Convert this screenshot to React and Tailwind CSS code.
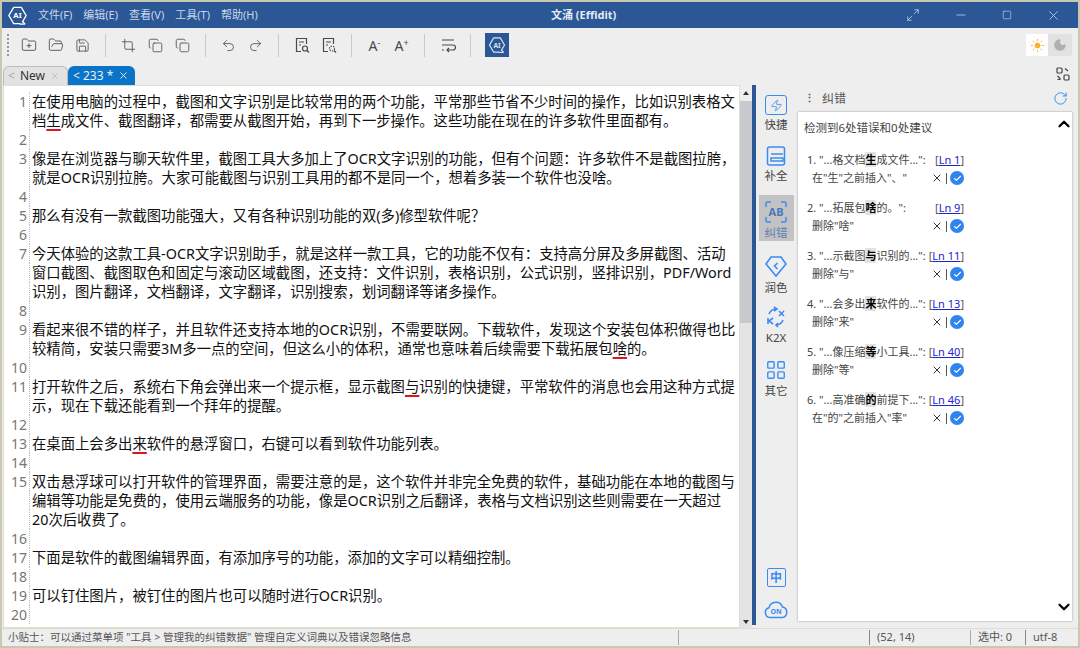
import { FolderPlus, FolderOpen, Save, Crop, Copy, Undo2, Redo2, Maximize2, Minus, Square, X, RotateCw, ChevronUp, ChevronDown, Check, Sun, Moon, LayoutGrid, Zap } from 'lucide-react';

const MENUS = ['文件(F)', '编辑(E)', '查看(V)', '工具(T)', '帮助(H)'];

const Err = ({ children }) => (
  <span className="underline decoration-[#e0141c] decoration-2 underline-offset-[3px]">{children}</span>
);

const LINES = [
  [1, '在使用电脑的过程中，截图和文字识别是比较常用的两个功能，平常那些节省不少时间的操作，比如识别表格文'],
  [null, <>档<Err>生</Err>成文件、截图翻译，都需要从截图开始，再到下一步操作。这些功能在现在的许多软件里面都有。</>],
  [2, ''],
  [3, '像是在浏览器与聊天软件里，截图工具大多加上了OCR文字识别的功能，但有个问题：许多软件不是截图拉胯，'],
  [null, '就是OCR识别拉胯。大家可能截图与识别工具用的都不是同一个，想着多装一个软件也没啥。'],
  [4, ''],
  [5, '那么有没有一款截图功能强大，又有各种识别功能的双(多)修型软件呢？'],
  [6, ''],
  [7, '今天体验的这款工具-OCR文字识别助手，就是这样一款工具，它的功能不仅有：支持高分屏及多屏截图、活动'],
  [null, '窗口截图、截图取色和固定与滚动区域截图，还支持：文件识别，表格识别，公式识别，竖排识别，PDF/Word'],
  [null, '识别，图片翻译，文档翻译，文字翻译，识别搜索，划词翻译等诸多操作。'],
  [8, ''],
  [9, '看起来很不错的样子，并且软件还支持本地的OCR识别，不需要联网。下载软件，发现这个安装包体积做得也比'],
  [null, <>较精简，安装只需要3M多一点的空间，但这么小的体积，通常也意味着后续需要下载拓展包<Err>啥</Err>的。</>],
  [10, ''],
  [11, '打开软件之后，系统右下角会弹出来一个提示框，显示截图与识别的快捷键，平常软件的消息也会用这种方式提'.replace('与识别', '\u0000')],
  [null, '示，现在下载还能看到一个拜年的提醒。'],
  [12, ''],
  [13, <>在桌面上会多出<Err>来</Err>软件的悬浮窗口，右键可以看到软件功能列表。</>],
  [14, ''],
  [15, '双击悬浮球可以打开软件的管理界面，需要注意的是，这个软件并非完全免费的软件，基础功能在本地的截图与'],
  [null, '编辑等功能是免费的，使用云端服务的功能，像是OCR识别之后翻译，表格与文档识别这些则需要在一天超过'],
  [null, '20次后收费了。'],
  [16, ''],
  [17, '下面是软件的截图编辑界面，有添加序号的功能，添加的文字可以精细控制。'],
  [18, ''],
  [19, '可以钉住图片，被钉住的图片也可以随时进行OCR识别。'],
  [20, ''],
];
LINES[15][1] = <>打开软件之后，系统右下角会弹出来一个提示框，显示截图<Err>与</Err>识别的快捷键，平常软件的消息也会用这种方式提</>;

const ISSUES = [
  { pre: '1. "...格文档', bad: '生', post: '成文件...":', ln: 'Ln 1', fix: '在"生"之前插入"、"' },
  { pre: '2. "...拓展包', bad: '啥', post: '的。":', ln: 'Ln 9', fix: '删除"啥"' },
  { pre: '3. "...示截图', bad: '与', post: '识别的...":', ln: 'Ln 11', fix: '删除"与"' },
  { pre: '4. "...会多出', bad: '来', post: '软件的...":', ln: 'Ln 13', fix: '删除"来"' },
  { pre: '5. "...像压缩', bad: '等', post: '小工具...":', ln: 'Ln 40', fix: '删除"等"' },
  { pre: '6. "...高准确', bad: '的', post: '前提下...":', ln: 'Ln 46', fix: '在"的"之前插入"率"' },
];

const Sep = () => <div className="mx-[9px] h-[23px] w-px bg-[#c4cbd3]" />;

const Tool = ({ children }) => (
  <div className="flex w-[27px] items-center justify-center text-[#4a4a4a]">{children}</div>
);

function AiLogo({ size = 24 }) {
  return (
    <svg width={size} height={size} viewBox="0 0 24 24" fill="none" stroke="currentColor" strokeWidth="1.4">
      <path d="M8 3.5h8l5 8.5-4 7M15 20.5H8L3 12l5-8.5" />
      <path d="M17 18l3 3M14 21h6" />
      <text x="12" y="15" textAnchor="middle" fontSize="8" fontWeight="700" fill="currentColor" stroke="none">AI</text>
    </svg>
  );
}

function FileGlass({ dots }) {
  return (
    <svg width="18" height="18" viewBox="0 0 18 18" fill="none" stroke="currentColor" strokeWidth="1.2">
      <path d="M8 15.5H3.5v-13h10V8" />
      <path d="M6 6h5M6 9h2" />
      <circle cx="12" cy="12.5" r="2.5" strokeDasharray={dots ? '1.5 1' : undefined} />
      <path d="M14 14.5l2 2" />
    </svg>
  );
}

function SideItem({ icon, label, active, className = '' }) {
  return (
    <div className={`flex w-[35px] flex-col items-center ${active ? 'bg-[#c3c3c3] text-[#5b7fb5]' : 'text-[#444]'} ${className}`}>
      {icon}
      <span className="mt-[2px] text-[11.5px] leading-[15px]">{label}</span>
    </div>
  );
}

export default function App() {
  return (
    <div
      className="flex h-[648px] w-[1080px] flex-col overflow-hidden border-x-[2px] border-y-[2px] border-[#c9c9b2] bg-[#eeeeee]"
      style={{ fontFamily: '"Noto Sans", "Noto Sans CJK SC", sans-serif' }}
    >
      {/* title bar */}
      <div className="relative flex h-[26px] shrink-0 items-center bg-[#2b5797] pl-[4px] text-[#c9d6e8]">
        <span className="text-white"><AiLogo size={23} /></span>
        <div className="ml-[9px] flex gap-[11px] text-[11px]">
          {MENUS.map((m) => <span key={m}>{m}</span>)}
        </div>
        <span className="absolute left-[549px] text-[11px] font-bold text-[#e4eaf3]">文涌 (Effidit)</span>
        <div className="ml-auto flex items-center gap-[34px] pr-[17px]">
          <Maximize2 size={14} strokeWidth={1.3} />
          <Minus size={14} strokeWidth={1.3} />
          <Square size={10} strokeWidth={1.5} />
          <X size={15} strokeWidth={1.3} />
        </div>
      </div>

      {/* toolbar */}
      <div className="flex h-[34px] shrink-0 items-center pl-[5px] pr-[6px]">
        <div className="h-[22px] w-[2px] border-l-2 border-dotted border-[#999]" />
        <div className="ml-[6px] flex items-center">
          <Tool><FolderPlus size={16} strokeWidth={1.3} /></Tool>
          <Tool><FolderOpen size={16} strokeWidth={1.3} /></Tool>
          <Tool><Save size={15} strokeWidth={1.3} /></Tool>
          <Sep />
          <Tool><Crop size={15} strokeWidth={1.3} /></Tool>
          <Tool><Copy size={15} strokeWidth={1.3} /></Tool>
          <Tool><Copy size={15} strokeWidth={1.3} strokeDasharray="3 1" /></Tool>
          <Sep />
          <Tool><Undo2 size={15} strokeWidth={1.3} /></Tool>
          <Tool><Redo2 size={15} strokeWidth={1.3} /></Tool>
          <Sep />
          <Tool><FileGlass /></Tool>
          <Tool><FileGlass dots /></Tool>
          <Sep />
          <Tool><span className="text-[14px]">A<sup className="text-[9px]">-</sup></span></Tool>
          <Tool><span className="text-[14px]">A<sup className="text-[9px]">+</sup></span></Tool>
          <Sep />
          <Tool>
            <svg width="16" height="16" viewBox="0 0 16 16" fill="none" stroke="currentColor" strokeWidth="1.2">
              <path d="M2 3h12M2 8h11a2 2 0 010 5H7M9 11l-2 2 2 2M2 13h2" />
            </svg>
          </Tool>
          <Sep />
          <div className="ml-[5px] flex h-[24px] w-[24px] items-center justify-center bg-[#2b5797] text-[#d9e3f0]">
            <AiLogo size={20} />
          </div>
        </div>
        <div className="ml-auto flex h-[22px]">
          <div className="flex w-[22px] items-center justify-center bg-white text-[#fbb02d]"><Sun size={15} fill="currentColor" strokeWidth={1.5} /></div>
          <div className="flex w-[24px] items-center justify-center bg-[#e2e2e2] text-[#b0b0b0]"><Moon size={14} fill="currentColor" /></div>
        </div>
      </div>

      {/* tabs */}
      <div className="flex h-[23px] shrink-0 items-end pl-[1px] pr-[8px]">
        <div className="flex h-[19px] w-[65px] items-center gap-[5px] rounded-t-[6px] border border-b-0 border-[#bbb] bg-[#e2e2e2] pl-[4px] text-[12px] text-[#333]">
          <span className="text-[#aaa]">&lt;</span>New<X size={10} className="text-[#bbb]" />
        </div>
        <div className="flex h-[19px] w-[67px] items-center gap-[5px] rounded-t-[6px] bg-[#0a74c9] pl-[5px] text-[12px] text-[#e6f1fa]">
          &lt; 233 *<X size={11} />
        </div>
        <div className="ml-auto mb-[4px] text-[#444]">
          <svg width="14" height="14" viewBox="0 0 14 14" fill="none" stroke="currentColor" strokeWidth="1.2">
            <rect x="1" y="1" width="5" height="5" rx="1" />
            <rect x="8" y="8" width="5" height="5" rx="1" />
            <path d="M9 1.5l3 2.5M1.5 9l3 3M1.5 12.5h3" />
          </svg>
        </div>
      </div>

      {/* main */}
      <div className="flex min-h-0 flex-1">
        {/* editor */}
        <div className="ml-[1px] w-[737px] overflow-hidden border border-[#dfdfcf] bg-white pt-[6px]">
          {LINES.map(([num, text], i) => (
            <div key={i} className="flex h-[19px] items-center">
              <div className="w-[25px] shrink-0 pr-[2px] text-right text-[14px] leading-[19px] text-[#777]">{num}</div>
              <div className="h-[19px] shrink-0 border-l border-dotted border-[#bbb]" />
              <div className="whitespace-nowrap pl-[2px] text-[14.35px] leading-[19px] text-[#111]">{text}</div>
            </div>
          ))}
        </div>

        {/* scrollbar */}
        <div className="flex w-[12px] shrink-0 flex-col items-center bg-[#e4e4e4]">
          <div className="flex h-[16px] w-full items-center justify-center bg-[#eeeeee]">
            <div className="h-0 w-0 border-x-[3.5px] border-b-[4px] border-x-transparent border-b-[#333]" />
          </div>
          <div className="h-[222px] w-full bg-[#c6c9ce]" />
          <div className="mt-auto mb-[4px] h-0 w-0 border-x-[3.5px] border-t-[4px] border-x-transparent border-t-[#333]" />
        </div>
        <div className="mb-[3px] w-[4px] shrink-0 bg-[#2b5797]" />

        {/* side nav */}
        <div className="flex w-[40px] shrink-0 flex-col items-center pt-[10px] text-[#3b8bf5]">
          <SideItem label="快捷" icon={
            <div className="relative flex h-[20px] w-[22px] items-center justify-center rounded-[3px] border-[1.5px] border-[#3b8bf5] text-[#3b8bf5]"><Zap size={13} strokeWidth={1.6} /></div>
          } />
          <SideItem className="mt-[14px]" label="补全" icon={
            <svg width="20" height="20" viewBox="0 0 20 20" fill="none" stroke="#3b8bf5" strokeWidth="1.5">
              <rect x="1.5" y="1" width="17" height="18" rx="2" />
              <path d="M5 8h12M5 12h12v3H5z" />
            </svg>
          } />
          <SideItem active className="mt-[12px] pt-[6px] pb-[1px]" label="纠错" icon={
            <svg width="22" height="22" viewBox="0 0 22 22" fill="none" stroke="#3b8bf5" strokeWidth="1.5">
              <path d="M1 6V2.5A1.5 1.5 0 012.5 1H6M16 1h3.5A1.5 1.5 0 0121 2.5V6M1 16v3.5A1.5 1.5 0 002.5 21H6M16 21h3.5a1.5 1.5 0 001.5-1.5V16" />
              <text x="11" y="15" textAnchor="middle" fontSize="11" fontWeight="700" fill="#4a78b8" stroke="none">AB</text>
            </svg>
          } />
          <SideItem className="mt-[13px]" label="润色" icon={
            <svg width="22" height="24" viewBox="0 0 22 24" fill="none" stroke="#3b8bf5" strokeWidth="1.6">
              <path d="M6 3h10l5 7-10 12L1 10z" />
              <path d="M12.5 9l-3 3 3 3" />
            </svg>
          } />
          <SideItem className="mt-[11px]" label="K2X" icon={
            <svg width="22" height="22" viewBox="0 0 22 22" fill="none" stroke="#3b8bf5" strokeWidth="1.6">
              <path d="M4 8a8 8 0 017-5M18 14a8 8 0 01-7 5M9 1l3 2-3 2M13 17l-2 2 2 2" />
              <path d="M14 5l5 5M19 5l-5 5M3 12v6M8 12l-4 3 4 3" />
            </svg>
          } />
          <SideItem className="mt-[14px]" label="其它" icon={<LayoutGrid size={22} strokeWidth={1.5} className="text-[#3b8bf5]" />} />
          <div className="mt-auto flex h-[19px] w-[19px] items-center justify-center rounded-[2px] border-[1.5px] border-[#3b8bf5] text-[12px] font-bold text-[#3b8bf5]">中</div>
          <div className="mt-[12px] mb-[9px]">
            <svg width="26" height="20" viewBox="0 0 26 20" fill="none" stroke="#3b8bf5" strokeWidth="1.5">
              <path d="M7 18.5a5 5 0 01-1-9.8 7 7 0 0113.5-.6A5.3 5.3 0 0119.5 18.5z" />
              <text x="13" y="15" textAnchor="middle" fontSize="7" fontWeight="700" fill="#3b8bf5" stroke="none">ON</text>
            </svg>
          </div>
        </div>

        {/* correction panel */}
        <div className="flex min-w-0 flex-1 flex-col pl-[2px] pr-[6px]">
          <div className="flex h-[27px] shrink-0 items-center pl-[6px] text-[#555]">
            <span className="text-[11px] font-bold">⋮</span>
            <span className="ml-[7px] text-[12px]">纠错</span>
            <RotateCw size={15} strokeWidth={1.6} className="ml-auto mr-[4px] text-[#3b8bf5]" />
          </div>
          <div className="relative mb-[7px] flex-1 bg-white pl-[6px] pt-[8px] shadow-[0_0_2px_#999] text-[#444]">
            <div className="text-[11.5px] leading-[16px]">检测到6处错误和0处建议</div>
            <ChevronUp size={18} strokeWidth={3} className="absolute right-[-1px] top-[3px] text-black" />
            <ChevronDown size={18} strokeWidth={3} className="absolute bottom-[5px] right-[-1px] text-black" />
            <div className="mt-[15px] flex w-[160px] flex-col gap-[12px] pl-[3px]">
              {ISSUES.map((it) => (
                <div key={it.ln} className="text-[11px] leading-[18px]">
                  <div className="flex justify-between whitespace-nowrap">
                    <span>{it.pre}<b className="bg-[#e2e2e2] text-black">{it.bad}</b>{it.post}</span>
                    <span className="text-[#555]">[<span className="text-[#2222cc] underline">{it.ln}</span>]</span>
                  </div>
                  <div className="flex items-center pl-[5px]">
                    <span>{it.fix}</span>
                    <X size={12} strokeWidth={2} className="ml-auto text-[#333]" />
                    <div className="mx-[3px] h-[11px] w-px bg-[#555]" />
                    <div className="flex h-[14px] w-[14px] items-center justify-center rounded-full bg-[#2d86f0] text-white">
                      <Check size={9} strokeWidth={3} />
                    </div>
                  </div>
                </div>
              ))}
            </div>
          </div>
        </div>
      </div>

      {/* status bar */}
      <div className="flex h-[18px] shrink-0 items-center border-t border-[#dcdcd0] text-[10.5px] text-[#555]">
        <span className="w-[676px] pl-[6px]">小贴士：可以通过菜单项 "工具 &gt; 管理我的纠错数据" 管理自定义词典以及错误忽略信息</span>
        <div className="h-[15px] w-px bg-[#aaa]" />
        <div className="w-[190px]" />
        <div className="h-[15px] w-px bg-[#888]" />
        <span className="w-[100px] pl-[7px] text-[11px]">(52, 14)</span>
        <div className="h-[15px] w-px bg-[#aaa]" />
        <span className="w-[54px] pl-[7px] text-[11px]">选中: 0</span>
        <div className="h-[15px] w-px bg-[#888]" />
        <span className="pl-[7px] text-[11px]">utf-8</span>
      </div>
    </div>
  );
}
